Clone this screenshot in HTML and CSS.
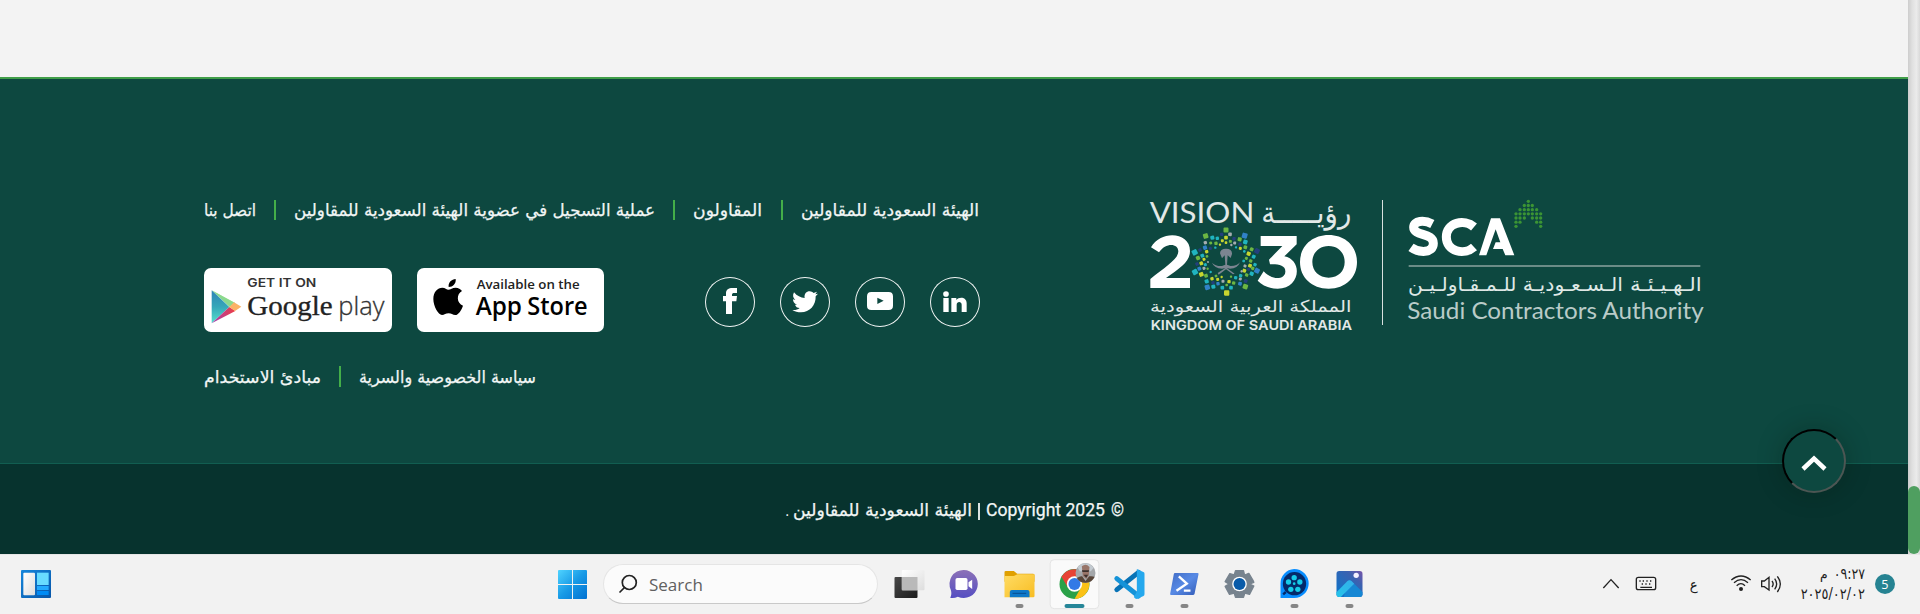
FILE: index.html
```html
<!DOCTYPE html>
<html lang="ar">
<head>
<meta charset="utf-8">
<title>الهيئة السعودية للمقاولين</title>
<link rel="stylesheet" href="styles.css">
</head>
<body>
<div class="browser">
  <div class="page">
    <div class="page-end"></div>
    <footer class="footer">
      <div class="footer-info">
        <nav class="links">
          <a><svg width="52" height="20"><text x="0" y="16" textLength="52" lengthAdjust="spacingAndGlyphs">اتصل بنا</text></svg></a>
          <a><svg width="361" height="20"><text x="0" y="16" textLength="361" lengthAdjust="spacingAndGlyphs">عملية التسجيل في عضوية الهيئة السعودية للمقاولين</text></svg></a>
          <a><svg width="69" height="20"><text x="0" y="16" textLength="69" lengthAdjust="spacingAndGlyphs">المقاولون</text></svg></a>
          <a><svg width="178" height="20"><text x="0" y="16" textLength="178" lengthAdjust="spacingAndGlyphs">الهيئة السعودية للمقاولين</text></svg></a>
        </nav>
        <div class="media">
          <div class="stores">
            <svg class="store" width="188" height="64" viewBox="42 264 564 192">
              <defs>
                <linearGradient id="gp1" x1="0" y1="0" x2="0" y2="1"><stop offset="0" stop-color="#2d83b5"/><stop offset=".5" stop-color="#35a7b9"/><stop offset="1" stop-color="#58e0cd"/></linearGradient>
                <linearGradient id="gp2"><stop offset="0" stop-color="#a13fb5"/><stop offset="1" stop-color="#ee3d43"/></linearGradient>
              </defs>
              <path d="M65 331L119 368L136 369Z" fill="#a5e49a"/><path d="M65 331L119 381L133 368Z" fill="#8bd98e"/>
              <path d="M65 331L118 381L65 430Z" fill="url(#gp1)"/>
              <path d="M65 430L118 381L136 393Z" fill="url(#gp2)"/>
              <path d="M132 367L154 380L135 393L118 381Z" fill="#fbb267"/>
              <text x="172" y="321" class="gp-small" textLength="207" lengthAdjust="spacingAndGlyphs">GET IT ON</text>
              <text x="172" y="404" class="gp-serif" textLength="256" lengthAdjust="spacingAndGlyphs">Google</text>
              <text x="445" y="404" class="gp-play" textLength="138" lengthAdjust="spacingAndGlyphs">play</text>
            </svg>
            <svg class="store" width="187" height="64" viewBox="681 264 561 192">
              <path d="M776 321C774 307 785 298 797 297C799 311 788 321 776 321Z"/>
              <path d="M775 329C782 329 787 323 797 323C805 323 812 327 816 333C798 343 800 370 819 377C814 391 805 405 796 405C788 405 784 400 776 400C767 400 763 405 756 405C745 405 730 379 730 357C730 335 743 323 757 323C765 323 770 329 775 329Z"/>
              <text x="860" y="328" class="as-small" textLength="309" lengthAdjust="spacingAndGlyphs">Available on the</text>
              <text x="857" y="405" class="as-big" textLength="139" lengthAdjust="spacingAndGlyphs">App</text>
              <text x="1012" y="405" class="as-big" textLength="181" lengthAdjust="spacingAndGlyphs">Store</text>
            </svg>
          </div>
          <div class="social">
            <a><svg width="50" height="50" viewBox="315 291 150 150"><path d="M378 402V364H369V348H378V340C378 329 386 324 397 324H411V339H403C398 339 396 341 396 345V348H411L409 364H396V402Z"/></svg></a>
            <a><svg width="50" height="50" viewBox="540 291 150 150"><path d="M582 337C591 348 602 353 614 354C611 338 625 330 637 336L641 339L651 335L646 343L654 341L647 349C648 376 629 397 603 397C594 397 584 395 577 390C586 391 593 389 599 384C592 384 587 380 585 374H591C583 371 579 366 579 358L586 360C579 354 577 346 582 337Z"/></svg></a>
            <a><svg width="50" height="50" viewBox="765 291 150 150"><path fill-rule="evenodd" d="M814 336H866Q879 336 879 349V377Q879 390 866 390H814Q801 390 801 377V349Q801 336 814 336ZM832 353V372L851 362Z"/></svg></a>
            <a><svg width="50" height="50" viewBox="990 291 150 150"><circle cx="1038" cy="342" r="8.500"/><path d="M1030 354H1046V396H1030ZM1054 354H1069V360C1077 349 1100 350 1100 370V396H1085V374C1085 363 1070 363 1070 374V396H1054Z"/></svg></a>
          </div>
        </div>
        <nav class="links links-legal">
          <a><svg width="117" height="21"><text x="0" y="17" textLength="117" lengthAdjust="spacingAndGlyphs">مبادئ الاستخدام</text></svg></a>
          <a><svg width="177" height="21"><text x="0" y="17" textLength="177" lengthAdjust="spacingAndGlyphs">سياسة الخصوصية والسرية</text></svg></a>
        </nav>
      </div>
      <div class="logos">
        <svg width="240" height="170" viewBox="0 0 720 510" class="logo">
          <g fill="#e2e9e8">
            <text x="59" y="129" class="mont-light" font-size="88" textLength="314" lengthAdjust="spacingAndGlyphs">VISION</text>
            <text x="394" y="129" class="ar" font-size="90" textLength="270" lengthAdjust="spacingAndGlyphs">رؤيـــــة</text>
            <text x="60" y="396" class="ar" font-size="49" textLength="604" lengthAdjust="spacingAndGlyphs">المملكة العربية السعودية</text>
            <text x="62" y="449" class="mont-semi" font-size="40" textLength="604" lengthAdjust="spacingAndGlyphs">KINGDOM OF SAUDI ARABIA</text>
          </g>
          <g fill="#fff">
            <path d="M63 202C92 150 180 155 180 213C180 246 150 264 108 294H180V324H61V297C106 260 145 238 145 214C144 188 106 188 87 217Z"/>
            <path d="M392 168H500V193L463 229C520 240 511 326 443 326C417 326 397 316 383 302L401 274C426 302 465 299 466 275C467 256 446 252 420 253L417 239L457 198H392Z"/>
            <path fill-rule="evenodd" d="M596 165C647 165 681 200 681 246C681 292 647 326 596 326C545 326 510 292 510 246C510 200 545 165 596 165ZM596 198C567 198 547 219 547 246C547 273 567 293 596 293C625 293 644 273 644 246C644 219 625 198 596 198Z"/>
          </g>
          <path fill="#7c8591" d="M270 220Q270 206 288 206Q307 206 306 222L302 234L293 226L291 254L302 258Q322 258 330 247Q323 266 300 266L290 264L314 281L309 283L288 268L266 284L263 279L286 264L276 266Q253 265 246 248Q257 259 276 258L286 254L284 226L276 235Z"/>
          <g id="star"></g>
        </svg>
        <div class="logo-divider"></div>
        <svg width="340" height="170" viewBox="0 0 1020 510" class="logo">
          <g class="sca">
            <path d="M157 132C132 119 101 122 101 142C101 169 160 157 160 190C160 222 116 218 93 202"/>
            <path d="M282 141C253 116 199 127 199 171C199 215 253 227 282 201"/>
          </g>
          <path fill="#fff" d="M333 115H360L403 226H376L368 207H339L347 187H361L347 148L319 226H297Z"/>
          <path stroke="#6b8c87" stroke-width="6" d="M86 258H961"/>
          <g fill="#dfe8e6">
            <text x="84" y="332" class="ar" font-size="57" textLength="325" lengthAdjust="spacingAndGlyphs">للـمـقـاولـيـن</text>
            <text x="428" y="332" class="ar" font-size="57" textLength="301" lengthAdjust="spacingAndGlyphs">الـسـعـوديـة</text>
            <text x="750" y="332" class="ar" font-size="57" textLength="215" lengthAdjust="spacingAndGlyphs">الـهـيـئـة</text>
          </g>
          <text x="82" y="417" fill="#b9cbc8" class="lato" font-size="67" textLength="889" lengthAdjust="spacingAndGlyphs">Saudi Contractors Authority</text>
          <g id="arrow" fill="#3b9434"></g>
        </svg>
      </div>
      <button class="to-top"><svg width="26" height="16" viewBox="0 0 26 16"><path d="M2 14L13 3.500L24 14"/></svg></button>
    </footer>
    <div class="copyright">
      <span class="dot">.</span>
      <svg width="179" height="24"><text x="0" y="18" textLength="179" lengthAdjust="spacingAndGlyphs">الهيئة السعودية للمقاولين</text></svg>
      <span class="bar"></span>
      <svg width="137" height="24"><text class="latin" x="0" y="18" textLength="119" lengthAdjust="spacingAndGlyphs">Copyright 2025</text><text class="latin" x="125" y="18" textLength="13" lengthAdjust="spacingAndGlyphs">©</text></svg>
    </div>
  </div>
  <div class="scrollbar"><div class="thumb"></div></div>
</div>
<div class="taskbar">
  <div class="widgets">
    <svg width="30" height="28" viewBox="63 90 90 84"><defs><linearGradient id="w" x2="1" y2="1"><stop offset="0" stop-color="#1687dc"/><stop offset="1" stop-color="#0755a8"/></linearGradient><linearGradient id="ww" x2="1" y2="1"><stop offset="0" stop-color="#fff"/><stop offset="1" stop-color="#ddd"/></linearGradient></defs><rect x="63" y="90" width="90" height="84" rx="3" fill="url(#w)"/><rect x="70" y="98" width="35" height="68" rx="3" fill="url(#ww)"/><path fill="#68dcff" d="M111 98h35v37h-35z"/><path fill="#22aafe" d="M111 138h35v12h-35z"/><path fill="#008bf5" d="M111 153h35v12h-35z"/></svg>
  </div>
  <svg class="start" width="30" height="60" viewBox="54 42 90 180"><defs><linearGradient id="s" gradientUnits="userSpaceOnUse" x1="54" y1="90" x2="141" y2="177"><stop offset="0" stop-color="#4fd3ff"/><stop offset=".5" stop-color="#189ae6"/><stop offset="1" stop-color="#0070d1"/></linearGradient></defs><path fill="url(#s)" d="M56 90H96V132H54V92ZM99 90H139L141 92V132H99ZM54 135H96V177H56L54 175ZM99 135H141V175L139 177H99Z"/></svg>
  <div class="search">
    <svg width="20" height="20" viewBox="0 0 20 20"><circle cx="11.300" cy="8.500" r="7"/><path d="M6.500 13.500L2 18"/></svg>
    <span>Search</span>
  </div>
  <div class="apps">
    <svg viewBox="1024.500 42 165 180"><defs><linearGradient id="tv" x2="1" y2="1"><stop offset="0" stop-color="#484848"/><stop offset="1" stop-color="#1c1c1c"/></linearGradient><linearGradient id="tw" x2="1" y2="1"><stop offset="0" stop-color="#fff"/><stop offset="1" stop-color="#ddd"/></linearGradient></defs><rect x="1062" y="111" width="69" height="63" rx="3" fill="url(#tv)"/><rect x="1084" y="90" width="68" height="61" rx="3" fill="url(#tw)"/><path fill="#b9b9b9" d="M1084 111h47v40h-47z"/></svg>
    <svg viewBox="-70.500 42 165 180"><defs><linearGradient id="ch" x2="0" y2="1"><stop offset="0" stop-color="#8c71b7"/><stop offset="1" stop-color="#554ec2"/></linearGradient></defs><path fill="url(#ch)" d="M10 90A42 42 0 1 1 -8 170Q-20 176 -31 173Q-25 163 -29 150A42 42 0 0 1 10 90Z"/><rect x="-15" y="114" width="36" height="36" rx="5" fill="#fff"/><path fill="#fff" d="M24 127L35 119V147L24 139Z"/></svg>
    <svg viewBox="94.500 42 165 180"><defs><linearGradient id="fo" x2="1" y2="1"><stop offset="0" stop-color="#ffdc64"/><stop offset="1" stop-color="#f8bd23"/></linearGradient></defs><path fill="#e0a000" d="M132 96Q132 93 136 93H160L170 101H218Q222 101 222 106V125H132Z"/><path fill="url(#fo)" d="M132 108H160L171 103H222V168Q222 172 218 172H132Z"/><path fill="#0d78c8" d="M148 172V156Q148 150 154 150H201Q207 150 207 156V172Z"/><path stroke="#074f91" stroke-width="3" d="M156 160H197"/><rect class="run" x="165" y="192" width="24" height="12" rx="6"/></svg>
    <svg viewBox="259.500 42 165 180"><rect x="269" y="59" width="146" height="147" rx="12" fill="#fafafa" stroke="#e4e4e4" stroke-width="3"/><circle cx="342" cy="132" r="45" fill="#2aa148"/><path fill="#e84335" d="M342 132L303 110A45 45 0 0 1 381 110H342Z"/><path fill="#fbc116" d="M342 110H381A45 45 0 0 1 342 177L361 143Z"/><path fill="#e84335" d="M303 110L323 144L342 110Z"/><circle cx="342" cy="132" r="23" fill="#fff"/><circle cx="342" cy="132" r="18" fill="#3279e6"/><circle cx="375" cy="99" r="30" fill="#a4a7aa"/><path fill="#594639" d="M349 114Q360 107 365 109L375 123L386 109Q399 108 402 111A30 30 0 0 1 349 114Z"/><path fill="#c4cbd1" d="M351 82Q374 57 400 83L391 94H358Z"/><path fill="#987569" d="M364 79Q376 69 387 81L385 106L377 117L367 108Z"/><path d="M364 91H386L384 96H366ZM369 104H383L377 113Z" fill="#3b302d"/><rect x="312" y="192" width="60" height="12" rx="6" fill="#268698"/></svg>
    <svg viewBox="424.500 42 165 180"><path d="M469 149L534 97" stroke="#0873b6" stroke-width="15" stroke-linecap="round"/><path d="M469 116L534 168" stroke="#1593d8" stroke-width="15" stroke-linecap="round"/><path fill="#25a8ed" d="M529 87L550 97Q552 98 552 102V162Q552 166 549 168L529 177Q524 177 520 171L529 155Z"/><rect class="run" x="495" y="192" width="24" height="12" rx="6"/></svg>
    <svg viewBox="589.500 42 165 180"><defs><linearGradient id="ps" x2="1" y2="1"><stop offset="0" stop-color="#416cc5"/><stop offset=".5" stop-color="#588ae5"/><stop offset="1" stop-color="#315ab6"/></linearGradient></defs><path fill="url(#ps)" d="M643 99H711Q715 99 714 103L702 162Q701 165 697 165H632Q628 165 629 161L640 102Q641 99 643 99Z"/><path fill="none" stroke="#fff" stroke-width="7" d="M655 109L679 131L648 152M670 152H690"/><rect class="run" x="660" y="192" width="24" height="12" rx="6"/></svg>
    <svg viewBox="754.500 42 165 180"><path fill="#77838e" stroke="#77838e" stroke-width="4" stroke-linejoin="round" d="M825 92H849L852 105L865 100L877 120L880 127L868 132L880 138L867 163L853 159L849 172H825L821 159L807 163L794 139L805 132L794 125L808 101L821 105Z"/><circle cx="837" cy="132" r="22" fill="#fff"/><circle cx="837" cy="132" r="18" fill="#095ba9"/></svg>
    <svg viewBox="919.500 42 165 180"><path fill="#078dff" d="M1001 87A43 43 0 1 1 1001 174H960V132A43 43 0 0 1 1001 87Z"/><circle cx="1002" cy="131" r="35" fill="#042a6a"/><g fill="#15cbe9"><circle cx="1001" cy="113" r="8"/><circle cx="984" cy="126" r="8"/><circle cx="1018" cy="126" r="8"/><circle cx="991" cy="148" r="8"/><circle cx="1012" cy="148" r="8"/><circle cx="1001" cy="131" r="4"/></g><path d="M968 163L976 156" stroke="#042a6a" stroke-width="7"/><rect class="run" x="990" y="192" width="24" height="12" rx="6"/></svg>
    <svg viewBox="1084.500 42 165 180"><defs><linearGradient id="ph" x1="0" y1="1" x2="1" y2="0"><stop offset="0" stop-color="#0876cc"/><stop offset=".7" stop-color="#3b61b0"/><stop offset="1" stop-color="#7855aa"/></linearGradient><linearGradient id="mt" x1="0" y1="1" x2="1" y2="0"><stop offset="0" stop-color="#23c4e9"/><stop offset="1" stop-color="#35aeea"/></linearGradient></defs><rect x="1128" y="93" width="78" height="78" rx="8" fill="url(#ph)"/><path fill="#1687d4" d="M1161 123Q1167 118 1173 123L1206 156V164Q1205 171 1198 171H1150Z"/><path fill="url(#mt)" d="M1128 157L1161 123Q1167 118 1173 123L1181 131L1141 171H1136Q1129 171 1128 164Z"/><circle cx="1187" cy="106" r="8" fill="#f5f1ff"/><rect class="run" x="1155" y="192" width="24" height="12" rx="6"/></svg>
  </div>
  <div class="tray">
    <svg width="324" height="60" viewBox="36 42 972 180">
      <g class="tray-line">
        <path d="M70 144L93 119L116 144"/>
        <rect x="169" y="112" width="58" height="37" rx="6"/><path d="M181 142H216M178 123h4M188 123h4M199 123h4M210 123h4M185 132h4M196 132h4M207 132h4"/>
        <path d="M454 120Q483 96 512 120M462 128Q483 110 504 128M470 137Q483 125 495 137"/>
        <path d="M545 123H553L567 112V150L553 140H545ZM576 123Q583 132 576 141M584 116Q596 132 584 148M592 109Q610 132 592 156"/>
      </g>
      <circle cx="483" cy="147" r="6" fill="#222"/>
      <g fill="#1d1d1d" class="ar">
        <text x="329" y="150" font-size="42" textLength="24" lengthAdjust="spacingAndGlyphs">ع</text>
        <text x="761" y="117" font-size="46" textLength="94" lengthAdjust="spacingAndGlyphs">٠٩:٢٧</text>
        <text x="720" y="117" font-size="42" textLength="23" lengthAdjust="spacingAndGlyphs">م</text>
        <text x="662" y="178" font-size="46" textLength="193" lengthAdjust="spacingAndGlyphs">٢٠٢٥/٠٢/٠٢</text>
      </g>
      <circle cx="915" cy="132" r="30" fill="#268392"/><text x="904" y="148" class="count">5</text>
    </svg>
  </div>
</div>
<script src="logos.js"></script>
</body>
</html>
```
FILE: styles.css
```css
* { box-sizing: border-box; }
body { margin: 0; width: 1920px; height: 614px; overflow: hidden; background: #f3f3f3; font-family: "DejaVu Sans", sans-serif; }
svg { display: block; flex: none; overflow: visible; }
.browser { display: flex; height: 554px; }
.page { width: 1908px; }
.page-end { height: 77px; background: #f3f3f3; }
.footer { position: relative; display: flex; height: 387px; padding: 101px 188px 0 204px; justify-content: space-between; background: #0d4840; border-top: 2px solid #419e49; border-bottom: 1px solid #115e51; }
.footer-info { width: 776px; padding-top: 20px; }
.links { display: flex; height: 20px; }
.links a { padding-right: 18px; padding-left: 18px; border-left: 2px solid #43ae49; }
.links a:first-child { padding-left: 0; border-left: 0; }
.links a:last-child { padding-right: 0; }
.links a:nth-child(3) { padding-right: 19px; }
.links text, .copyright text { font: 17px "DejaVu Sans", sans-serif; fill: #f2f6f5; stroke: #f2f6f5; stroke-width: .25px; }
.media { display: flex; justify-content: space-between; align-items: flex-start; height: 64px; margin-top: 48px; }
.stores { display: flex; gap: 25px; }
.store { background: #fff; border-radius: 7px; overflow: hidden; }
.social { display: flex; gap: 25px; padding-top: 9px; }
.social a { width: 50px; height: 50px; border-radius: 50%; box-shadow: inset 0 0 0 1px #f2f5f4; }
.social svg { fill: #fff; }
.links-legal { height: 21px; margin-top: 34px; }
.gp-small { font: 600 36px Inter, sans-serif; fill: #333; }
.gp-serif { font: 83px "Liberation Serif", serif; fill: #222; stroke: #222; stroke-width: 1; }
.gp-play { font: 300 76px "Open Sans", sans-serif; fill: #333; stroke: #333; stroke-width: 1; }
.as-small { font: 600 38px "Open Sans", sans-serif; fill: #222; }
.as-big { font: 600 78px "Open Sans", sans-serif; fill: #000; }
.logos { display: flex; }
.logo-divider { width: 1px; height: 125px; margin: 20px 0 0 12px; background: #d8e1df; }
.logo + .logo-divider + .logo { margin-left: -3px; }
.mont-light { font-family: Lato, sans-serif; font-weight: 400; }
.mont-semi { font-family: Inter, sans-serif; font-weight: 600; }
.lato { font-family: Lato, sans-serif; font-weight: 400; }
.ar { font-family: "DejaVu Sans", sans-serif; }
.sca { fill: none; stroke: #fff; stroke-width: 27; }
.to-top { position: absolute; left: 1782px; top: 350px; z-index: 2; width: 64px; height: 64px; padding: 3px 0 0; border: 2px solid; border-color: #000 #4c5653 #4c5653 #000; border-radius: 50%; background: #0d4840; box-shadow: 0 0 26px rgba(0, 20, 10, .28); display: flex; align-items: center; justify-content: center; }
.to-top path { fill: none; stroke: #fff; stroke-width: 4.500; }
.copyright { display: flex; height: 90px; padding: 34px 0 0 785px; background: #07332e; color: #edf2f1; }
.copyright .latin { font: 400 18.500px Roboto, sans-serif; fill: #f4f7f6; }
.dot { width: 8px; font-size: 14px; line-height: 27px; }
.bar { width: 2px; height: 17px; margin: 5px 6px 0; background: #dbe3e1; }
.scrollbar { width: 12px; height: 554px; padding-top: 486px; background: linear-gradient(90deg, #cdcdcd, #e0e0e0 35%, #ebebeb 70%, #d9d9d9); }
.thumb { height: 68px; border-radius: 6px; background: #4f9f60; }
.taskbar { display: flex; height: 60px; background: #f2f2f2; border-top: 1px solid #e6e6e6; }
.taskbar > svg, .apps, .tray { margin-top: -1px; }
.widgets { width: 558px; padding: 15px 0 0 21px; }
.search { display: flex; align-items: center; gap: 12px; width: 275px; height: 40px; margin: 9px 0 0 15px; padding-left: 14px; border: 1px solid #e5e5e5; border-bottom-color: #c9c9c9; border-radius: 20px; background: #fbfbfb; font: 17px "Open Sans", sans-serif; color: #606060; }
.search span { margin-left: -1px; }
.search svg { fill: none; stroke: #222; stroke-width: 1.700; stroke-linecap: round; }
.apps { display: flex; margin-left: 3.500px; }
.apps svg { width: 55px; height: 60px; }
.run { fill: #868686; }
.tray { margin-left: 215.500px; }
.tray-line { fill: none; stroke: #222; stroke-width: 4; }
.count { font: 38px "Open Sans", sans-serif; fill: #fff; }
```
FILE: logos.js
```js
const NS = "http://www.w3.org/2000/svg";
const colors = { g: "#6cb643", y: "#c7d52f", t: "#20b4c0", b: "#3182c8", n: "#243f7d", s: "#a5adb0" };
// x, y, size, colour
const star = `288 150 14 g,275 163 9 n,300 163 10 s,262 175 9 t,288 173 10 y,312 176 9 n,277 182 8 y,301 184 8 g,288 188 7 y,
227 168 14 g,247 173 11 t,344 167 15 b,329 178 11 g,346 186 12 t,226 188 9 s,242 189 8 g,258 190 9 g,270 194 6 y,314 189 8 s,330 193 9 n,304 195 6 s,
225 203 11 b,241 205 8 n,256 203 6 t,346 202 10 g,331 205 8 y,318 202 6 t,194 217 15 t,210 210 9 n,230 215 9 y,381 213 14 n,365 208 10 g,356 221 11 y,343 214 7 t,
204 234 11 g,217 227 10 t,231 229 7 g,371 230 10 t,349 235 8 g,362 243 9 g,222 238 8 y,234 246 5 s,341 243 7 t,201 252 9 n,214 250 10 y,226 254 8 t,375 254 9 t,360 257 10 y,345 258 8 s,
195 276 15 t,208 266 10 b,222 265 8 s,233 266 6 g,381 272 14 b,368 265 9 g,356 268 8 n,343 272 10 y,214 283 12 y,228 287 10 g,242 276 6 t,365 281 11 t,350 285 9 g,332 287 9 t,335 274 6 s,
230 304 11 t,246 296 9 y,258 288 7 g,232 322 14 b,249 308 9 n,263 298 8 y,250 320 11 t,264 311 9 b,279 304 8 s,275 291 6 y,346 320 14 g,330 311 10 b,347 303 10 n,331 297 8 s,317 293 9 t,297 305 9 y,303 290 6 g,311 309 9 g,277 323 10 t,290 315 7 g,303 323 10 t,290 339 15 y`;
const starGroup = document.getElementById("star");
star.split(",").forEach((entry) => {
  const [x, y, size, color] = entry.trim().split(" ");
  const dot = document.createElementNS(NS, "rect");
  const side = Number(size) + 1;
  dot.setAttribute("x", x - side / 2);
  dot.setAttribute("y", y - side / 2);
  dot.setAttribute("width", side);
  dot.setAttribute("height", side);
  dot.setAttribute("rx", 3);
  dot.setAttribute("fill", colors[color]);
  dot.setAttribute("transform", `rotate(${(x * 0.3 - 86).toFixed(1)} ${x} ${y})`);
  starGroup.append(dot);
});
// Each column: centre x, first row, last row
const columns = [[408, 3, 6], [420, 2, 5], [433, 1, 4], [445, 0, 3], [457, 1, 4], [470, 2, 5], [482, 3, 6]];
const arrow = document.getElementById("arrow");
columns.forEach(([x, from, to]) => {
  for (let row = from; row <= to; row++) {
    const dot = document.createElementNS(NS, "circle");
    dot.setAttribute("cx", x);
    dot.setAttribute("cy", 64 + row * 12.5);
    dot.setAttribute("r", 5);
    arrow.append(dot);
  }
});
```
